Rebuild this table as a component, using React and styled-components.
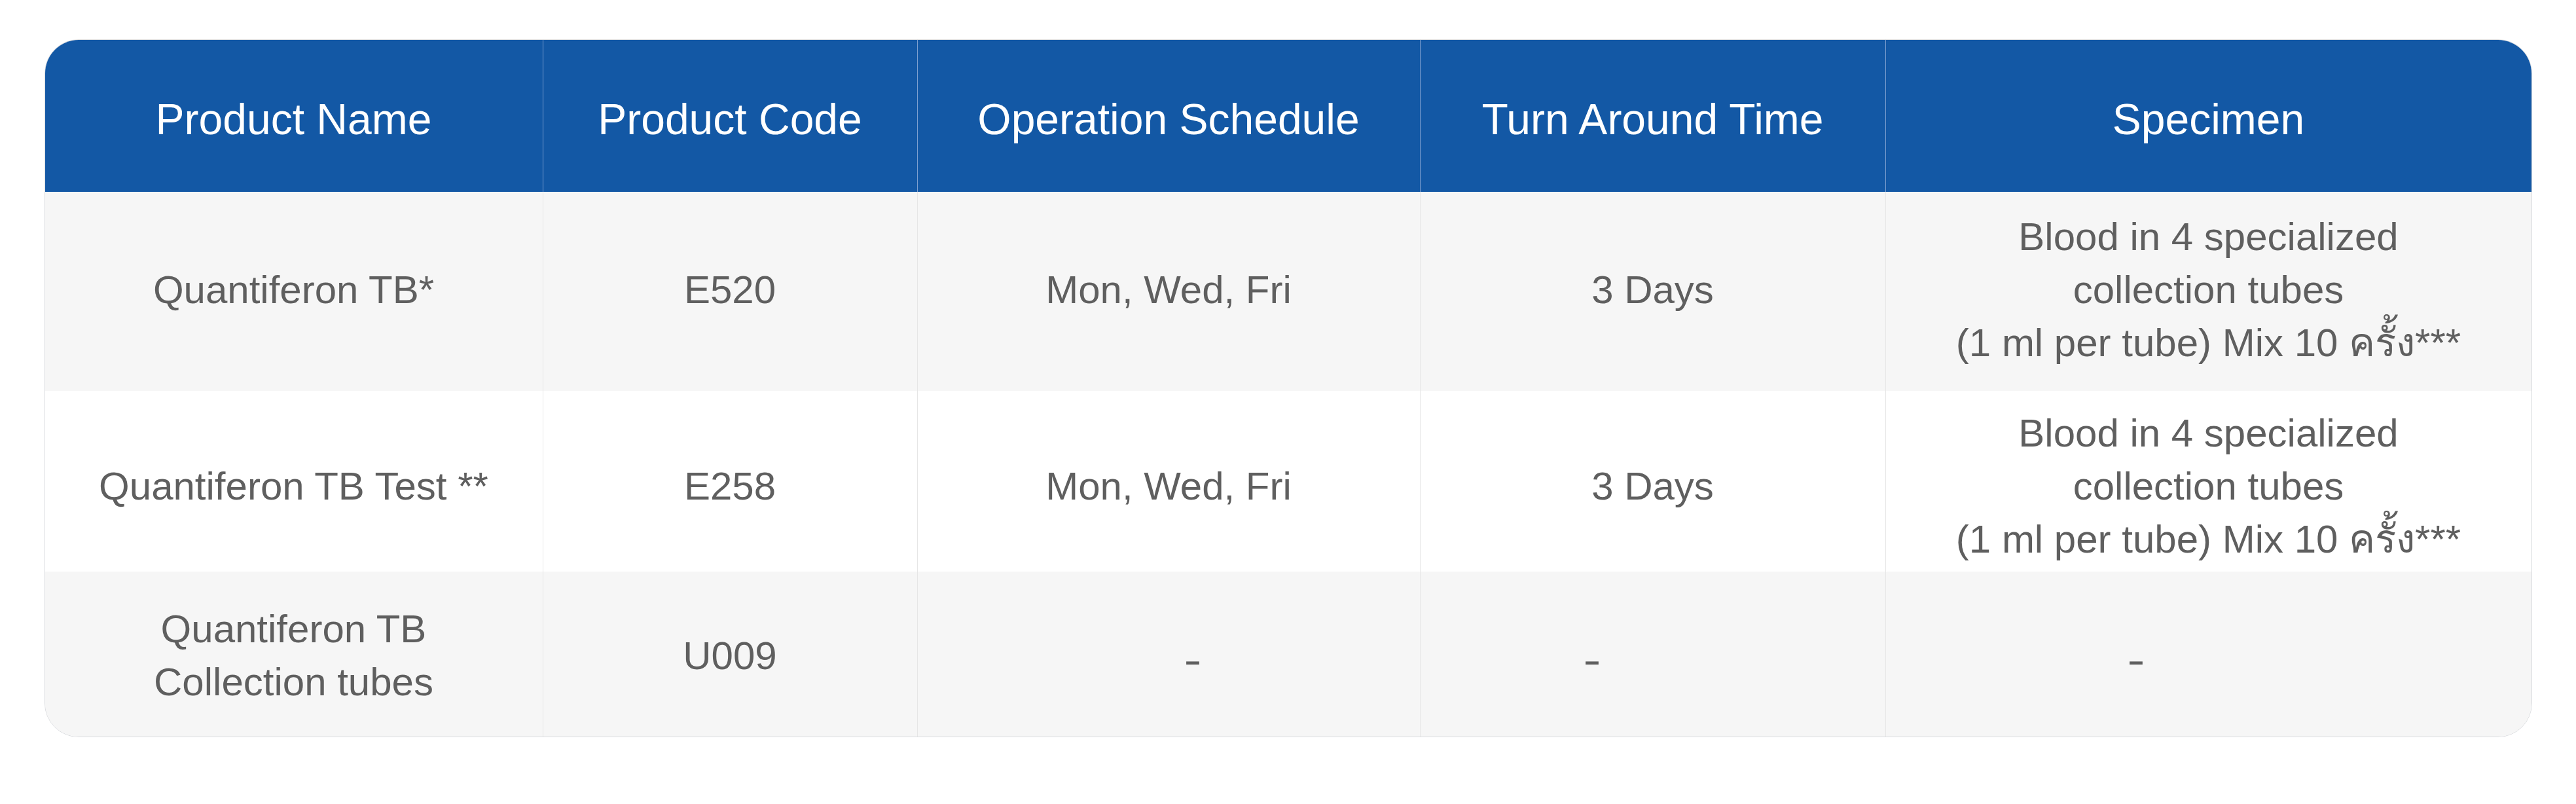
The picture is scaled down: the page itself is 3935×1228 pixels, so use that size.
import React from 'react';
import styled, { createGlobalStyle } from 'styled-components';

const GlobalStyle = createGlobalStyle`
  html, body {
    margin: 0;
    padding: 0;
    background: #ffffff;
  }
`;

const COLUMNS = '760px 572px 768px 711px 987px';

const Page = styled.main`
  padding: 60px 0 0;
  font-family: 'Liberation Sans', Arial, 'Noto Sans', sans-serif;
`;

const Table = styled.div`
  width: 3800px;
  margin: 0 auto;
  border: 1px solid #d9dbde;
  border-radius: 52px;
  overflow: hidden;
  box-sizing: border-box;
`;

const Row = styled.div`
  display: grid;
  grid-template-columns: ${COLUMNS};
  height: ${({ $height }) => $height}px;
  background: ${({ $shade }) => ($shade ? '#f6f6f6' : '#ffffff')};

  & > * {
    padding-top: ${({ $pad = [0, 0] }) => $pad[0]}px;
    padding-bottom: ${({ $pad = [0, 0] }) => $pad[1]}px;
  }
`;

const HeaderRow = styled(Row)`
  background: #1358a5;
`;

const Cell = styled.div`
  display: flex;
  align-items: center;
  justify-content: center;
  text-align: center;
  padding-left: 60px;
  padding-right: 60px;
  box-sizing: border-box;
  white-space: pre-line;
  font-size: 60px;
  line-height: 81px;
  color: #5f5f5f;

  & + & {
    border-left: 1px solid #e6e6e6;
  }
`;

const HeadCell = styled(Cell)`
  font-size: 66px;
  color: #ffffff;

  & + & {
    border-left: 1px solid #7d9fcf;
  }
`;

const Dash = styled.span`
  display: inline-block;
  transform: translate(${({ $shift }) => $shift}px, 6px) scaleX(1.35);
`;

const headers = [
  'Product Name',
  'Product Code',
  'Operation Schedule',
  'Turn Around Time',
  'Specimen',
];

const specimen = 'Blood in 4 specialized\ncollection tubes\n(1 ml per tube) Mix 10 ครั้ง***';

const rows = [
  {
    height: 304,
    pad: [0, 6],
    shade: true,
    cells: ['Quantiferon TB*', 'E520', 'Mon, Wed, Fri', '3 Days', specimen],
  },
  {
    height: 276,
    pad: [14, 0],
    shade: false,
    cells: ['Quantiferon TB Test **', 'E258', 'Mon, Wed, Fri', '3 Days', specimen],
  },
  {
    height: 252,
    pad: [4, 0],
    shade: true,
    cells: [
      'Quantiferon TB\nCollection tubes',
      'U009',
      { dash: 37 },
      { dash: -93 },
      { dash: -111 },
    ],
  },
];

const App = () => (
  <Page>
    <GlobalStyle />
    <Table>
      <HeaderRow $height={232} $pad={[10, 0]}>
        {headers.map((h) => (
          <HeadCell key={h}>{h}</HeadCell>
        ))}
      </HeaderRow>
      {rows.map((row, i) => (
        <Row key={i} $height={row.height} $pad={row.pad} $shade={row.shade}>
          {row.cells.map((c, j) => (
            <Cell key={j}>
              {typeof c === 'string' ? c : <Dash $shift={c.dash}>-</Dash>}
            </Cell>
          ))}
        </Row>
      ))}
    </Table>
  </Page>
);

export default App;
